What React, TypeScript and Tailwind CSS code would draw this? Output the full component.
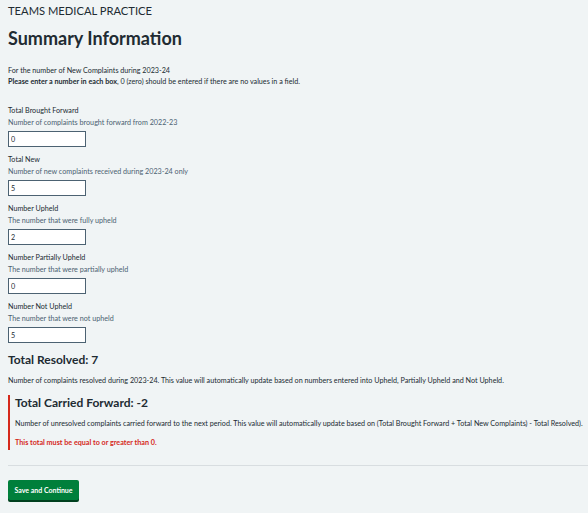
import { useState } from 'react';

const fields = [
	{ label: 'Total Brought Forward', hint: 'Number of complaints brought forward from 2022-23', value: '0' },
	{ label: 'Total New', hint: 'Number of new complaints received during 2023-24 only', value: '5' },
	{ label: 'Number Upheld', hint: 'The number that were fully upheld', value: '2' },
	{ label: 'Number Partially Upheld', hint: 'The number that were partially upheld', value: '0' },
	{ label: 'Number Not Upheld', hint: 'The number that were not upheld', value: '5' },
];

export default function App() {
	const [values, setValues] = useState<string[]>(fields.map((f) => f.value));

	const num = (i: number) => parseInt(values[i]) || 0;
	const resolved = num(2) + num(3) + num(4);
	const carried = num(0) + num(1) - resolved;

	return (
		<div className="min-h-[513px] w-[588px] bg-[#f0f4f5] pl-2 text-[#212b32] font-['Lato',sans-serif]">
			<div className="pt-[4px] text-[11.2px] leading-[14px]">TEAMS MEDICAL PRACTICE</div>
			<h1 className="mt-[9px] text-[18px] leading-[22px] font-bold">Summary Information</h1>

			<div className="mt-[16px] text-[7.2px] leading-[11px]">
				<p>For the number of New Complaints during 2023-24</p>
				<p><b>Please enter a number in each box</b>, 0 (zero) should be entered if there are no values in a field.</p>
			</div>

			<div className="mt-[18px] flex flex-col gap-[7px]">
				{fields.map((f, i) => (
					<div key={i} className="flex flex-col">
						<label className="text-[7.2px] leading-[12px]">{f.label}</label>
						<span className="text-[7.2px] leading-[12px] text-[#4c6272]">{f.hint}</span>
						<input
							className="mt-[2px] h-[16px] w-[78px] border border-[#4c6272] bg-white px-[2px] text-[7.2px] outline-none"
							value={values[i]}
							onChange={(e) => {
								const next = [...values];
								next[i] = e.target.value;
								setValues(next);
							}}
						/>
					</div>
				))}
			</div>

			<h2 className="mt-[8px] text-[12px] leading-[18px] font-bold">Total Resolved: {resolved}</h2>
			<p className="mt-[6px] text-[7.2px] leading-[12px]">
				Number of complaints resolved during 2023-24. This value will automatically update based on numbers entered into Upheld, Partially Upheld and Not Upheld.
			</p>

			<div className="mt-[8px] border-l-[2px] border-[#d5281b] pl-[5px] pb-[1px]">
				<h2 className="text-[12px] leading-[16px] font-bold">Total Carried Forward: {carried}</h2>
				<p className="mt-[7px] text-[7.2px] leading-[12px]">
					Number of unresolved complaints carried forward to the next period. This value will automatically update based on (Total Brought Forward + Total New Complaints) - Total Resolved).
				</p>
				{carried < 0 && (
					<p className="mt-[7px] text-[7.2px] leading-[12px] font-bold text-[#d5281b]">This total must be equal to or greater than 0.</p>
				)}
			</div>

			<hr className="mt-[15px] border-t border-[#d8dde0]" />

			<button className="mt-[14px] h-[20px] w-[71px] rounded-[2px] bg-[#007f3b] text-[7px] font-bold text-white shadow-[0_2px_0_#00401e]">
				Save and Continue
			</button>
		</div>
	);
}
